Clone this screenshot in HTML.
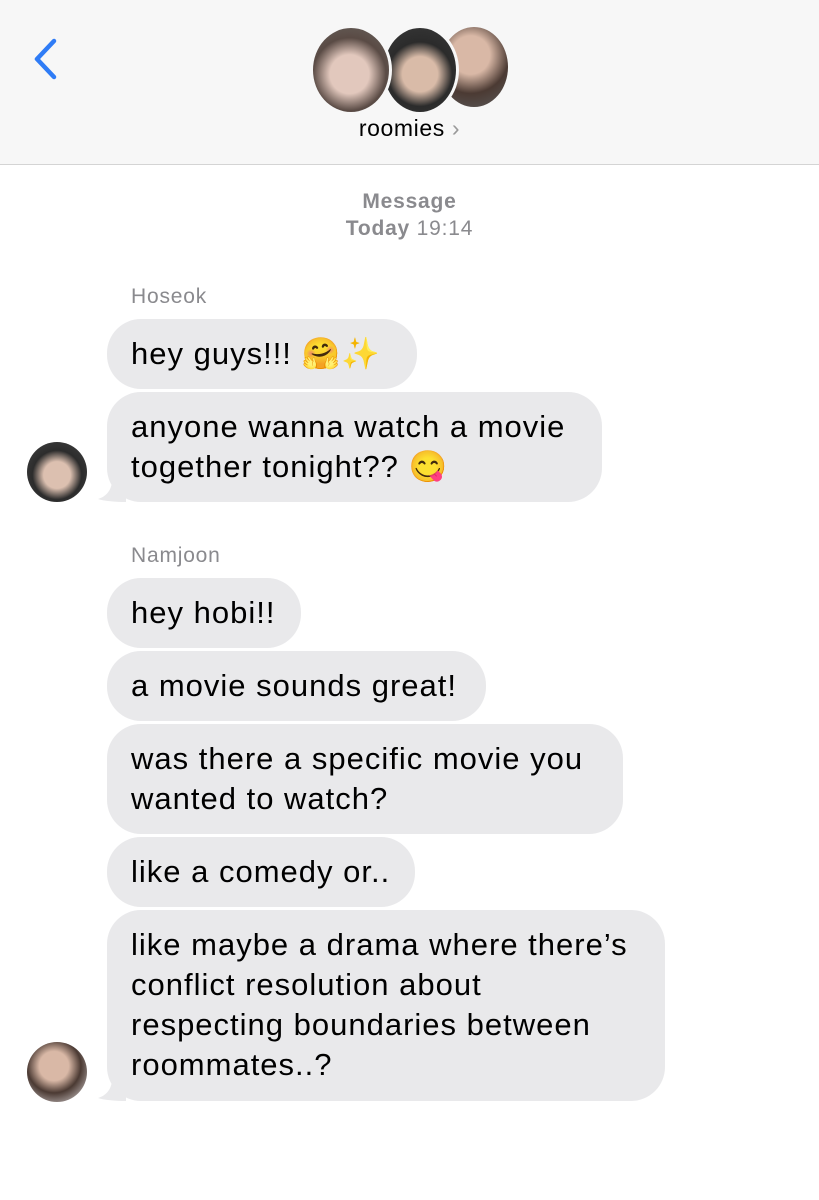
<!DOCTYPE html>
<html><head><style>
body{margin:0;width:819px;height:1200px;background:#fff;font-family:"Liberation Sans",sans-serif;position:relative;overflow:hidden}
.hdr{position:absolute;left:0;top:0;width:819px;height:164px;background:#f7f7f7;border-bottom:1px solid #d4d4d4}
.b{position:absolute;left:107px;background:#e9e9eb;border-radius:34px;color:#000;font-size:31px;letter-spacing:1px;line-height:40px;padding:15px 24px;box-sizing:border-box;white-space:nowrap}
.name{position:absolute;left:131px;font-size:21px;letter-spacing:0.8px;color:#8a8a8e}
.av{position:absolute;border-radius:50%;overflow:hidden}
.tail{position:absolute;width:30px;height:22px}
</style></head><body>
<div class="hdr">
<svg style="position:absolute;left:30px;top:36px" width="30" height="46" viewBox="0 0 30 46"><path d="M24 5 L7 23 L24 41" fill="none" stroke="#2f7cf6" stroke-width="4.5" stroke-linecap="round" stroke-linejoin="round"/></svg>
<div class="av" style="left:440px;top:27px;width:68px;height:80px;background:radial-gradient(circle at 45% 35%,#d9b8a6 0 30%,#4b3a33 60%,#5b5b5b)"></div>
<div class="av" style="left:381px;top:25px;width:72px;height:84px;border:3px solid #f7f7f7;background:radial-gradient(circle at 50% 55%,#d9bba8 0 30%,#2b2b2b 55%,#3a3a3a)"></div>
<div class="av" style="left:310px;top:25px;width:76px;height:84px;border:3px solid #f7f7f7;background:radial-gradient(circle at 48% 55%,#e2c8bd 0 32%,#5a4b45 60%,#6a6560)"></div>
<div style="position:absolute;left:0;width:819px;top:115px;text-align:center;font-size:23px;letter-spacing:0.6px;color:#000">roomies <span style="color:#999">&#8250;</span></div>
</div>
<div style="position:absolute;top:188px;width:819px;text-align:center;font-size:21px;letter-spacing:0.8px;color:#8a8a8e;line-height:27px"><b style="font-weight:600">Message</b><br><b style="font-weight:600">Today</b> 19:14</div>
<div class="name" style="top:285px">Hoseok</div>
<div class="b" style="top:319px;width:310px;height:70px">hey guys!!! 🤗✨</div>
<div class="b" style="top:392px;width:495px;height:110px">anyone wanna watch a movie<br>together tonight?? 😋</div>
<svg class="tail" style="left:96px;top:480px" viewBox="0 0 30 22"><path d="M30 0 L30 22 C20 22 8 21 2 19 C12 16 16 8 16 0Z" fill="#e9e9eb"/></svg>
<div class="av" style="left:27px;top:442px;width:60px;height:60px;background:radial-gradient(circle at 50% 55%,#dcc0b0 0 30%,#2c2c2c 55%,#444)"></div>
<div class="name" style="top:544px">Namjoon</div>
<div class="b" style="top:578px;width:194px;height:70px">hey hobi!!</div>
<div class="b" style="top:651px;width:379px;height:70px">a movie sounds great!</div>
<div class="b" style="top:724px;width:516px;height:110px">was there a specific movie you<br>wanted to watch?</div>
<div class="b" style="top:837px;width:308px;height:70px">like a comedy or..</div>
<div class="b" style="top:910px;width:558px;height:191px">like maybe a drama where there’s<br>conflict resolution about<br>respecting boundaries between<br>roommates..?</div>
<svg class="tail" style="left:96px;top:1079px" viewBox="0 0 30 22"><path d="M30 0 L30 22 C20 22 8 21 2 19 C12 16 16 8 16 0Z" fill="#e9e9eb"/></svg>
<div class="av" style="left:27px;top:1042px;width:60px;height:60px;background:radial-gradient(circle at 45% 40%,#d9b8a6 0 30%,#4b3a33 55%,#e8e4e6)"></div>
</body></html>
